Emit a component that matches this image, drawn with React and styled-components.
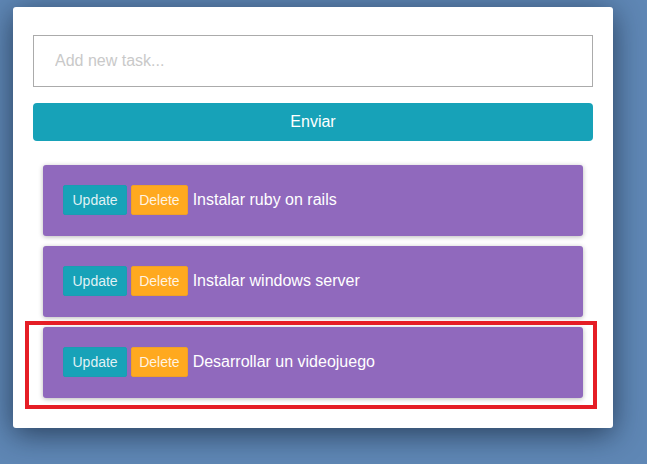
import React from 'react'
import styled, { createGlobalStyle } from 'styled-components'

const tasks = [
  { id: 1, text: 'Instalar ruby on rails' },
  { id: 2, text: 'Instalar windows server' },
  { id: 3, text: 'Desarrollar un videojuego', marked: true },
]

const GlobalStyle = createGlobalStyle`
  html, body {
    margin: 0;
    padding: 0;
    height: 100%;
    background: #5f87b5;
    font-family: "Liberation Sans", Arial, sans-serif;
  }
  body {
    overflow: hidden;
  }
`

const Page = styled.div`
  padding: 7px 0 0 13px;
`

const Card = styled.div`
  width: 600px;
  box-sizing: border-box;
  padding: 28px 20px 30px;
  background: #fff;
  border-radius: 3px;
  box-shadow: 0 6px 30px rgba(10, 25, 45, 0.65);
`

const Form = styled.form`
  display: flex;
  flex-direction: column;
  gap: 16px;
  margin: 0 0 24px;
`

const TaskInput = styled.input`
  height: 52px;
  box-sizing: border-box;
  padding: 0 21px;
  border: 1px solid #ababab;
  border-radius: 0;
  font: 16px "Liberation Sans", Arial, sans-serif;
  color: #333;
  outline: none;

  &::placeholder {
    color: #c9c9c9;
  }
`

const SubmitButton = styled.button`
  height: 38px;
  border: none;
  border-radius: 4px;
  background: #17a2b8;
  color: #fff;
  font: 16px "Liberation Sans", Arial, sans-serif;
  cursor: pointer;
`

const List = styled.ul`
  list-style: none;
  margin: 0;
  padding: 0 10px;
  display: flex;
  flex-direction: column;
  gap: 10px;
`

const Item = styled.li`
  position: relative;
  display: flex;
  align-items: center;
  height: 71px;
  box-sizing: border-box;
  padding: 0 20px 1px;
  background: #9069bd;
  border-radius: 3px;
  box-shadow: 0 1px 5px rgba(0, 0, 0, 0.28);
  color: #fff;
  font-size: 16px;
`

const Marker = styled.span`
  position: absolute;
  top: -6px;
  left: -18px;
  right: -14px;
  bottom: -11px;
  border: 4px solid #e51d25;
  pointer-events: none;
`

const SmallButton = styled.button`
  height: 30px;
  padding: 0 ${p => p.$px}px;
  margin-right: ${p => p.$gap}px;
  border: 1px solid ${p => p.$border};
  border-radius: 2px;
  background: ${p => p.$bg};
  color: rgba(255, 255, 255, 0.88);
  font: 14px "Liberation Sans", Arial, sans-serif;
  cursor: pointer;
`

const TaskText = styled.span`
  line-height: 1;
`

export default function App() {
  return (
    <>
      <GlobalStyle />
      <Page>
        <Card>
          <Form onSubmit={e => e.preventDefault()}>
            <TaskInput placeholder="Add new task..." />
            <SubmitButton type="submit">Enviar</SubmitButton>
          </Form>
          <List>
            {tasks.map(task => (
              <Item key={task.id}>
                <SmallButton $bg="#17a2b8" $border="#1b9db2" $px={8.5} $gap={4}>Update</SmallButton>
                <SmallButton $bg="#ffa91f" $border="#f0a126" $px={7} $gap={5}>Delete</SmallButton>
                <TaskText>{task.text}</TaskText>
                {task.marked && <Marker />}
              </Item>
            ))}
          </List>
        </Card>
      </Page>
    </>
  )
}
